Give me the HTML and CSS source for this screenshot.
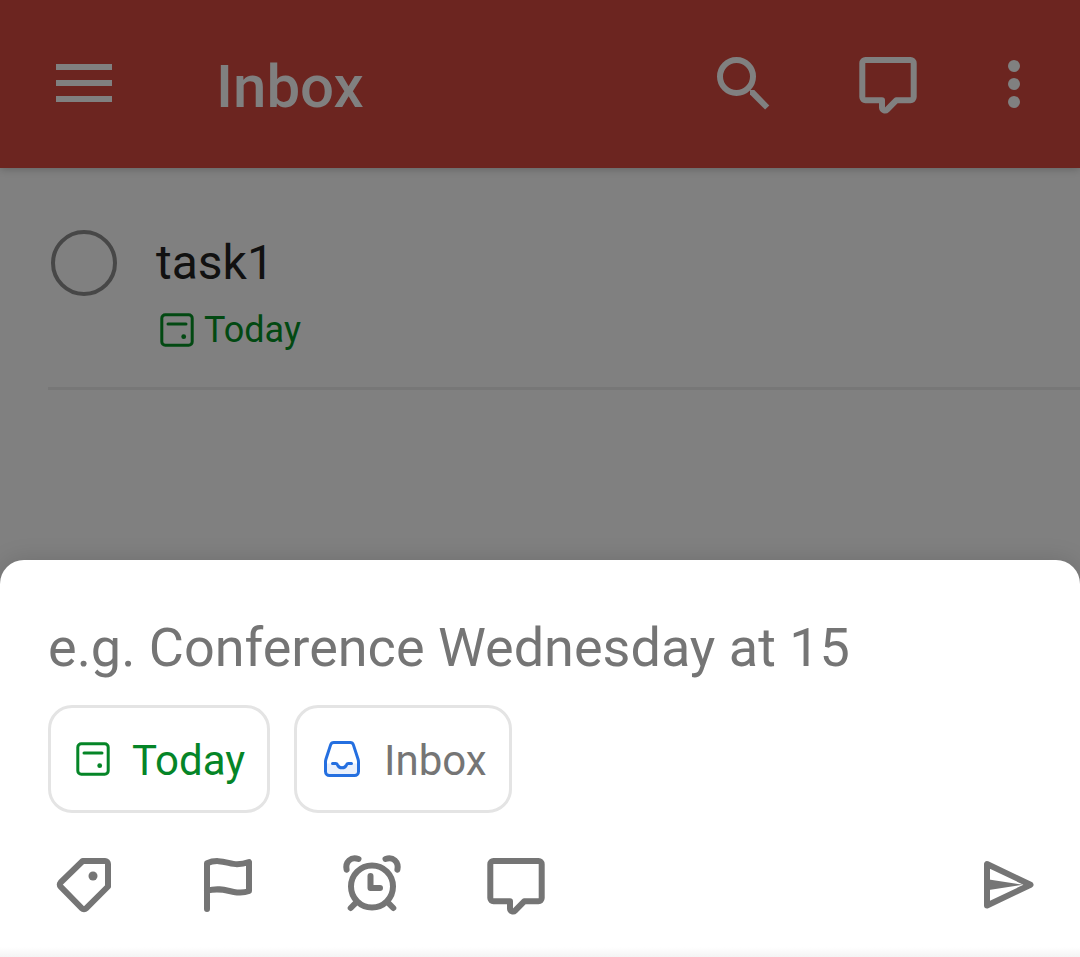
FILE: index.html
```html
<!DOCTYPE html>
<html lang="en">
<head>
<meta charset="utf-8">
<meta name="viewport" content="width=device-width, initial-scale=1">
<title>Inbox</title>
<link rel="stylesheet" href="styles.css">
</head>
<body>
<header class="app-bar">
  <button class="icon-button" type="button" aria-label="Menu">
    <svg class="icon" viewBox="0 0 72 72"><path class="solid" d="M8 16h56v6H8zM8 32h56v6H8zM8 48h56v6H8z"/></svg>
  </button>
  <h1 class="title">Inbox</h1>
  <div class="actions">
    <button class="icon-button" type="button" aria-label="Search">
      <svg class="icon" viewBox="0 0 72 72"><circle class="line" cx="28.5" cy="28.5" r="16.5"/><path class="solid" d="M42 42h4.3l15 15.400-4.200 4.200L42 46.400z"/></svg>
    </button>
    <button class="icon-button" type="button" aria-label="Comments">
      <svg class="icon" viewBox="0 0 72 72"><path class="line" d="M13.5 12h45a3.2 3.2 0 0 1 3.2 3.2v33.9a3.2 3.2 0 0 1-3.2 3.2H44.2l-9.1 9.3a3 3 0 0 1-5.1-2.1v-7.2H13.5a3.2 3.2 0 0 1-3.2-3.2V15.2a3.2 3.2 0 0 1 3.2-3.2z"/></svg>
    </button>
    <button class="icon-button more" type="button" aria-label="More options">
      <svg class="icon" viewBox="0 0 72 72"><circle class="solid" cx="36" cy="18" r="6"/><circle class="solid" cx="36" cy="36" r="6"/><circle class="solid" cx="36" cy="54" r="6"/></svg>
    </button>
  </div>
</header>

<main class="content">
  <ul class="tasks">
    <li class="task">
      <input class="check" type="checkbox" id="task-1">
      <div class="task-body">
        <label class="task-name" for="task-1">task1</label>
        <div class="task-date">
          <svg class="small-icon" viewBox="0 0 36 36"><rect class="thin" x="2.8" y="2.8" width="30.4" height="30.4" rx="3.5"/><path class="thin" d="M9 12h18"/><circle class="solid" cx="24.7" cy="24.7" r="2.4"/></svg>
          <span>Today</span>
        </div>
      </div>
    </li>
  </ul>
</main>

<form class="sheet">
  <input class="task-input" type="text" aria-label="Task name" placeholder="e.g. Conference Wednesday at 15">
  <div class="chips">
    <button class="chip due" type="button">
      <svg class="small-icon" viewBox="0 0 36 36"><rect class="thin" x="2.8" y="2.8" width="30.4" height="30.4" rx="3.5"/><path class="thin" d="M9 12h18"/><circle class="solid" cx="24.7" cy="24.7" r="2.4"/></svg>
      <span class="chip-text">Today</span>
    </button>
    <button class="chip" type="button">
      <svg class="inbox-icon" viewBox="0 0 42 42"><path class="tray-fill" d="M4.5 25.5H16c1 3 2.5 5 5 5s4-2 5-5h11.5v8a4 4 0 0 1-4 4h-25a4 4 0 0 1-4-4z"/><path class="thin" d="M13 4.5h16a3.5 3.5 0 0 1 3.4 2.4L37 21q.5 1.5.5 3v9.5a4 4 0 0 1-4 4h-25a4 4 0 0 1-4-4V24q0-1.5.5-3L9.6 6.9A3.5 3.5 0 0 1 13 4.5z"/><path class="thin" d="M11.5 25.5h3.2q1.3 0 1.800 1.300a4.900 4.900 0 0 0 9 0q.5-1.300 1.800-1.300h3.200"/></svg>
      <span class="chip-text">Inbox</span>
    </button>
  </div>
  <div class="toolbar">
    <button class="icon-button" type="button" aria-label="Labels">
      <svg class="icon" viewBox="0 0 72 72"><path class="line" d="M34.7 12H57a3 3 0 0 1 3 3v22.5L38.1 59.4a3 3 0 0 1-4.2 0L12.6 37.7a3 3 0 0 1 0-4.2z"/><circle class="solid" cx="45" cy="27" r="4.5"/></svg>
    </button>
    <button class="icon-button" type="button" aria-label="Priority">
      <svg class="icon" viewBox="0 0 72 72"><path class="line" d="M15 60V14.2C27 9 37 15.200 45 15.200q6 0 12-2.200v29c-4 1.600-8 1.800-12 1.400C36 42.500 29 38 15 41.700"/></svg>
    </button>
    <button class="icon-button" type="button" aria-label="Reminders">
      <svg class="icon" viewBox="0 0 72 72"><circle class="line" cx="36" cy="37.5" r="21"/><path class="line" d="M34.5 27v12h9.500M10.600 20.700C9 13 15 7.200 22.500 10M61.400 20.700C63 13 57 7.200 49.500 10M14.700 59l5.800-5.800M57.300 59l-5.800-5.800"/></svg>
    </button>
    <button class="icon-button" type="button" aria-label="Comment">
      <svg class="icon" viewBox="0 0 72 72"><path class="line" d="M13.5 12h45a3.2 3.2 0 0 1 3.2 3.2v33.9a3.2 3.2 0 0 1-3.2 3.2H44.2l-9.1 9.3a3 3 0 0 1-5.1-2.1v-7.2H13.5a3.2 3.2 0 0 1-3.2-3.2V15.2a3.2 3.2 0 0 1 3.2-3.2z"/></svg>
    </button>
    <button class="icon-button send" type="submit" aria-label="Send">
      <svg class="icon" viewBox="0 0 72 72"><path class="line" d="M15 15v41.5L58.5 35.75z"/><path class="solid" d="M17 30.6l34 5.15-34 5.15z"/></svg>
    </button>
  </div>
</form>
</body>
</html>
```

FILE: styles.css
```css
* {
  box-sizing: border-box;
}

body {
  display: flex;
  flex-direction: column;
  min-height: 100vh;
  margin: 0;
  background: #808080;
  font-family: Roboto, "Liberation Sans", sans-serif;
}

button,
input {
  margin: 0;
  font-family: inherit;
}

.app-bar {
  display: flex;
  align-items: center;
  height: 168px;
  padding: 0 30px 0 48px;
  background: #6c2520;
  color: #808080;
  box-shadow: 0 1px 8px rgba(0, 0, 0, 0.24);
}

.icon-button {
  display: flex;
  justify-content: center;
  flex: none;
  width: 72px;
  padding: 0;
  border: 0;
  background: none;
  color: inherit;
}

.icon {
  flex: none;
  width: 72px;
  height: 72px;
}

.line,
.thin {
  fill: none;
  stroke: currentColor;
  stroke-width: 6;
  stroke-linecap: round;
  stroke-linejoin: round;
}

.thin {
  stroke-width: 3;
}

.solid {
  fill: currentColor;
}

.title {
  flex: 1;
  margin: 0;
  padding: 6px 0 0 96px;
  font-size: 60px;
  font-weight: 500;
  line-height: 72px;
}

.actions {
  display: flex;
  gap: 72px;
}

.more {
  margin-left: -18px;
}

.content {
  flex: 1;
  padding-top: 62px;
}

.tasks {
  margin: 0;
  padding: 0 0 0 48px;
  list-style: none;
}

.task {
  display: flex;
  gap: 39px;
  padding: 0 0 39px 3px;
  border-bottom: 3px solid #777777;
}

.check {
  appearance: none;
  flex: none;
  width: 66px;
  height: 66px;
  border: 4px solid #474747;
  border-radius: 50%;
}

.task-body {
  display: flex;
  flex-direction: column;
  gap: 16px;
}

.task-name {
  color: #111111;
  font-size: 48px;
  line-height: 66px;
}

.task-date {
  display: flex;
  align-items: center;
  gap: 9px;
  padding-left: 3px;
  color: #024912;
  font-size: 36px;
  line-height: 36px;
}

.small-icon {
  flex: none;
  width: 36px;
  height: 36px;
}

.sheet {
  display: flex;
  flex-direction: column;
  padding: 55px 36px 36px 48px;
  border-radius: 24px 24px 0 0;
  background: linear-gradient(to top, #f4f4f4, #ffffff 10px);
  box-shadow: 0 0 24px rgba(0, 0, 0, 0.14);
  color: #757575;
}

.task-input {
  width: 100%;
  height: 64px;
  padding: 0;
  border: 0;
  outline: 0;
  background: none;
  color: #202020;
  font-size: 54px;
}

.task-input::placeholder {
  color: #757575;
  opacity: 1;
}

.chips {
  display: flex;
  gap: 24px;
  margin: 26px 0 36px;
}

.chip {
  display: flex;
  align-items: center;
  gap: 21px;
  height: 108px;
  padding: 0 22px 0 24px;
  border: 3px solid #e4e4e4;
  border-radius: 24px;
  background: #ffffff;
  color: #757575;
  font-size: 42px;
}

.chip-text {
  padding-top: 2px;
}

.due {
  color: #058527;
}

.inbox-icon {
  flex: none;
  width: 42px;
  height: 42px;
  color: #246fe0;
}

.tray-fill {
  fill: #e9f0fc;
}

.toolbar {
  display: flex;
  gap: 72px;
}

.send {
  margin-left: auto;
}
```
